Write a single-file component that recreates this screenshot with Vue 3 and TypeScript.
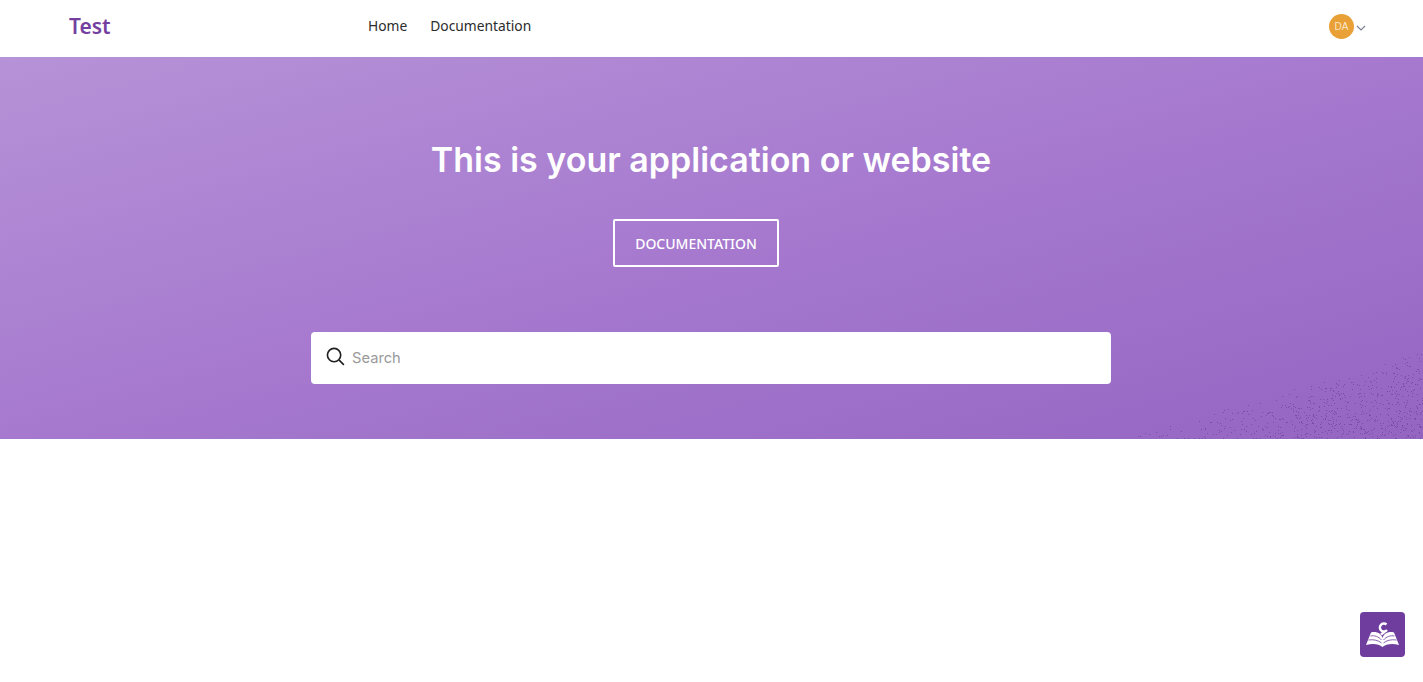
<script setup lang="ts">
interface NavLink {
  label: string;
  href: string;
}

const links: NavLink[] = [
  { label: "Home", href: "#" },
  { label: "Documentation", href: "#" },
];

// speckle in the bottom right corner of the hero
let seed = 7;
const rnd = () => {
  seed = (seed * 16807) % 2147483647;
  return seed / 2147483647;
};
const dots: { x: number; y: number }[] = [];
for (let i = 0; i < 3400; i++) {
  const x = rnd() * 300;
  const y = rnd() * 88;
  const edge = 88 - x * 0.29;
  if (y > edge && rnd() < (y - edge + 24) / 120) {
    dots.push({ x: Math.round(x), y: Math.round(y) });
  }
}
</script>

<template>
  <div class="page">
    <header class="topbar">
      <a class="brand" href="#">Test</a>
      <nav class="nav">
        <a v-for="link in links" :key="link.label" :href="link.href">{{ link.label }}</a>
      </nav>
      <div class="user">
        <span class="avatar">DA</span>
        <svg class="caret" width="10" height="6" viewBox="0 0 10 6" fill="none">
          <path d="M1 1l4 4 4-4" stroke="#7b7f93" stroke-width="1.1" />
        </svg>
      </div>
    </header>

    <section class="hero">
      <svg class="speckle" width="300" height="88" viewBox="0 0 300 88">
        <rect
          v-for="(d, i) in dots"
          :key="i"
          :x="d.x"
          :y="d.y"
          width="1"
          height="1"
          fill="#7a4ea8"
        />
      </svg>
      <h1>This is your application or website</h1>
      <div class="action">
        <a class="doc-btn" href="#">DOCUMENTATION</a>
      </div>
      <label class="search">
        <svg width="19" height="19" viewBox="0 0 20 20" fill="none">
          <circle cx="8.5" cy="8.5" r="7" stroke="#1f1f1f" stroke-width="1.7" />
          <path d="M13.6 13.6l5.2 5.2" stroke="#1f1f1f" stroke-width="1.7" />
        </svg>
        <input type="text" placeholder="Search" />
      </label>
    </section>

    <button class="help" type="button" aria-label="Help">
      <svg width="45" height="45" viewBox="0 0 45 45" fill="none">
        <path
          d="M22.5 35C19 32 13 31 6 33l5-12.5c5-1.5 10 .5 11.5 5.5C24 21 29 19 34 20.500L39 33c-7-2-13-1-16.500 2z"
          fill="#fff"
        />
        <path
          d="M10.5 24c4-.8 8 .5 11 4M8.5 28c5-.8 10 .3 13 3M34.500 24c-4-.8-8 .5-11 4M36.500 28c-5-.8-10 .3-13 3"
          stroke="#6f3d9e"
          stroke-width=".8"
        />
        <path
          d="M26.5 12.5A4 4 0 1 0 27 18M25 19.5l-4 3"
          stroke="#fff"
          stroke-width="2.4"
        />
      </svg>
    </button>
  </div>
</template>

<style scoped>
.page {
  min-height: 682px;
  background: #fff;
}

.topbar {
  display: flex;
  align-items: center;
  height: 57px;
  padding: 0 57px 5px 69px;
  box-sizing: border-box;
  background: #fff;
}

.brand {
  width: 299px;
  color: #74409f;
  font-family: "Noto Sans", sans-serif;
  font-size: 21px;
  font-weight: 600;
  text-decoration: none;
}

.nav {
  display: flex;
  flex: 1;
  gap: 23px;
  margin-top: -2px;
}

.nav a {
  color: #2b2b2b;
  font-family: "Noto Sans", sans-serif;
  font-size: 13.8px;
  text-decoration: none;
}

.user {
  display: flex;
  align-items: center;
  gap: 2px;
}

.caret {
  margin-top: 3px;
}

.avatar {
  display: flex;
  align-items: center;
  justify-content: center;
  width: 25px;
  height: 25px;
  border-radius: 50%;
  background: #e9a036;
  color: #fbe6c6;
  font-family: "Liberation Sans", sans-serif;
  font-size: 10px;
}

.hero {
  display: flex;
  position: relative;
  flex-direction: column;
  align-items: center;
  height: 382px;
  box-sizing: border-box;
  padding: 83px 1px 0 0;
  overflow: hidden;
  background: linear-gradient(to bottom right, #b692d7 0%, #a679cf 50%, #9466c2 100%);
}

.speckle {
  position: absolute;
  right: 0;
  bottom: 0;
}

h1 {
  margin: 0;
  color: #fff;
  font-family: "Inter", sans-serif;
  font-size: 34px;
  font-weight: 600;
  line-height: 40px;
}

.action {
  margin-top: 39px;
  padding-right: 30px;
}

.doc-btn {
  display: flex;
  align-items: center;
  justify-content: center;
  width: 166px;
  height: 48px;
  box-sizing: border-box;
  border: 2px solid #fff;
  border-radius: 2px;
  color: #fff;
  font-family: "Noto Sans", sans-serif;
  font-size: 14px;
  font-weight: 500;
  text-decoration: none;
}

.search {
  display: flex;
  align-items: center;
  gap: 7px;
  width: 800px;
  height: 52px;
  box-sizing: border-box;
  margin-top: 65px;
  padding: 0 15px;
  border-radius: 4px;
  background: #fff;
}

.search svg {
  margin-top: -3px;
}

.search input {
  flex: 1;
  border: 0;
  outline: 0;
  padding: 1px 0;
  font-family: "Inter", sans-serif;
  font-size: 14.7px;
}

.search input::placeholder {
  color: #9a9a9a;
}

.help {
  position: fixed;
  right: 18px;
  bottom: 25px;
  display: flex;
  align-items: center;
  justify-content: center;
  width: 45px;
  height: 45px;
  padding: 0;
  border: 0;
  border-radius: 4px;
  background: #6f3d9e;
}
</style>
